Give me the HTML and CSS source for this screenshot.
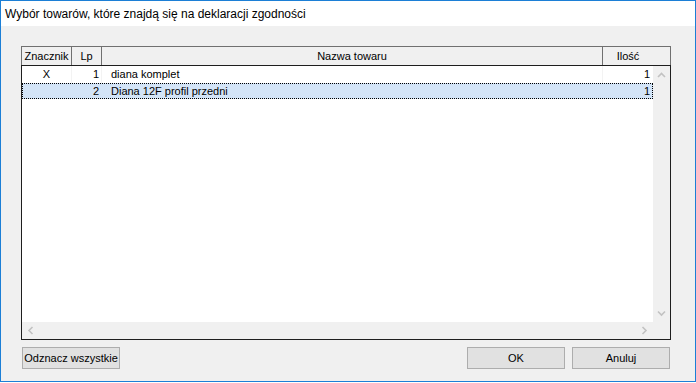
FILE: index.html
```html
<!DOCTYPE html>
<html lang="pl">
<head>
    <meta charset="UTF-8">
    <meta name="viewport" content="width=device-width, initial-scale=1.0">
    <title>Wybór towarów</title>
    <link rel="stylesheet" href="styles.css">
</head>
<body>
<div class="window">
    <div class="titlebar">Wybór towarów, które znajdą się na deklaracji zgodności</div>

    <div class="client">
        <!-- siatka towarów -->
        <div class="grid">
            <div class="head">
                <div class="hc col-mark">Znacznik</div>
                <div class="hc col-lp">Lp</div>
                <div class="hc col-name">Nazwa towaru</div>
                <div class="hc col-qty">Ilość</div>
            </div>

            <div class="body">
                <div class="top">
                    <div class="rows">
                        <div class="row">
                            <div class="cell center">X</div>
                            <div class="cell right">1</div>
                            <div class="cell name">diana komplet</div>
                            <div class="cell qty">1</div>
                        </div>
                        <div class="row sel">
                            <div class="cell center"></div>
                            <div class="cell right">2</div>
                            <div class="cell name">Diana 12F profil przedni</div>
                            <div class="cell qty">1</div>
                        </div>
                    </div>
                    <div class="vscroll">
                        <svg class="arrow" width="17" height="17" viewBox="0 0 17 17"><path d="M5 11 L8.5 7.5 L12 11" /></svg>
                        <svg class="arrow" width="17" height="17" viewBox="0 0 17 17"><path d="M5 6.5 L8.5 10 L12 6.5" /></svg>
                    </div>
                </div>
                <div class="bottom">
                    <div class="hscroll">
                        <svg class="arrow" width="17" height="17" viewBox="0 0 17 17"><path d="M10.5 5 L7 8.5 L10.5 12" /></svg>
                        <svg class="arrow" width="17" height="17" viewBox="0 0 17 17"><path d="M6.5 5 L10 8.5 L6.5 12" /></svg>
                    </div>
                    <div class="corner"></div>
                </div>
            </div>
        </div>

        <div class="buttons">
            <button class="btn">Odznacz wszystkie</button>
            <div class="spacer"></div>
            <button class="btn">OK</button>
            <button class="btn">Anuluj</button>
        </div>
    </div>
</div>
</body>
</html>
```

FILE: styles.css
```css
html, body {
    margin: 0;
    padding: 0;
    background: #ffffff;
}

.window {
    width: 696px;
    height: 382px;
    box-sizing: border-box;
    border: 1px solid #1c7fd6;
    display: flex;
    flex-direction: column;
    background: #f0f0f0;
}

.titlebar {
    height: 25px;
    background: #ffffff;
    padding-left: 4px;
    font-family: "Liberation Sans", Arial, sans-serif;
    font-size: 12px;
    line-height: 27px;
    color: #000;
    white-space: nowrap;
}

.client {
    flex: 1;
    padding: 20px 24px 0 20px;
    font-family: "Liberation Sans", Arial, sans-serif;
    font-size: 11px;
    color: #000;
}

/* siatka */
.grid {
    width: 650px;
}

.head {
    display: flex;
    height: 19px;
    box-sizing: border-box;
    border-top: 1px solid #707070;
    background: #f0f0f0;
}
.hc {
    border-left: 1px solid #707070;
    box-sizing: border-box;
    text-align: center;
    line-height: 18px;
    white-space: nowrap;
    overflow: hidden;
}
.col-mark { width: 50px; }
.col-lp { width: 30px; }
.col-name { width: 501px; }
.col-qty {
    width: 69px;
    border-right: 1px solid #707070;
    padding-right: 17px;
}

.body {
    height: 275px;
    box-sizing: border-box;
    border: 1px solid #1e1e1e;
    display: flex;
    flex-direction: column;
}

.top {
    flex: 1;
    display: flex;
}
.rows {
    flex: 1;
    background: #ffffff;
}
.row {
    display: grid;
    grid-template-columns: 50px 30px 501px 50px;
    height: 17px;
    line-height: 16px;
}
.row.sel {
    height: 16px;
    margin-top: 0;
    background: #d3e4f7;
    outline: 1px dotted #000;
    outline-offset: -1px;
}
.cell {
    border-right: 1px solid #f3f3f3;
    white-space: nowrap;
    overflow: hidden;
}
.row.sel .cell {
    border-right-color: transparent;
}
.cell.center { text-align: center; }
.cell.right { text-align: right; padding-right: 2px; }
.cell.name { padding-left: 9px; }
.cell.qty {
    border-right: none;
    text-align: right;
    padding-right: 3px;
}

.vscroll {
    width: 17px;
    background: #f0f0f0;
    display: flex;
    flex-direction: column;
    justify-content: space-between;
}
.bottom {
    height: 17px;
    display: flex;
}
.hscroll {
    flex: 1;
    background: #f0f0f0;
    display: flex;
    justify-content: space-between;
}
.corner {
    width: 17px;
    background: #f0f0f0;
}
.arrow {
    display: block;
}
.arrow path {
    fill: none;
    stroke: #c2c2c2;
    stroke-width: 1.6;
}

/* przyciski */
.buttons {
    display: flex;
    gap: 7px;
    margin-top: 7px;
    width: 650px;
    padding: 0 1px;
    box-sizing: border-box;
}
.spacer { flex: 1; }
.btn {
    width: 98px;
    height: 22px;
    margin: 0;
    padding: 0;
    border: 1px solid #adadad;
    background: #e1e1e1;
    font-family: "Liberation Sans", Arial, sans-serif;
    font-size: 11px;
    color: #000;
}
```
